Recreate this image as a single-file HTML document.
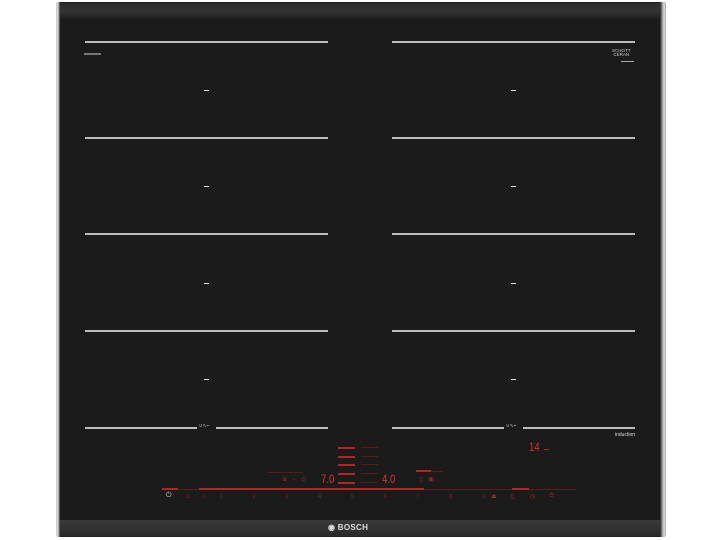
<!DOCTYPE html>
<html><head><meta charset="utf-8"><style>
*{margin:0;padding:0;box-sizing:border-box}
body{width:720px;height:540px;background:#fff;position:relative;overflow:hidden;font-family:"Liberation Sans",sans-serif}
.a{position:absolute}
.frame{left:56px;top:2px;width:610px;height:535px;background:linear-gradient(90deg,#b9b9b9,#e8e8e8 1px,#9a9a9a 3px,#222 4px,#222 calc(100% - 6px),#888 calc(100% - 4px),#ddd calc(100% - 2px),#aaa);border-radius:2px}
.glass{left:60px;top:3px;width:600px;height:517px;background:#1c1b1b}
.topband{left:60px;top:3px;width:600px;height:16px;background:linear-gradient(180deg,#2c2c2c,#353535 50%,#1e1d1d)}
.bot{left:60px;top:520px;width:600px;height:16px;background:linear-gradient(180deg,#3a3a3a,#2a2a2a);}
.ln{height:2px;background:#bdbdbd}
.d{width:5px;height:1px;background:#ddd}
.r{background:#b8231f}
.rd{background:#5a1a17}
.seg{color:#d9302a;font-size:12px;font-family:"Liberation Sans",sans-serif;transform:scaleX(.8);transform-origin:left}
.nums{left:203px;top:494px;width:282px;display:flex;justify-content:space-between;color:#7a2620;font-size:5px}
</style></head><body>
<div class="a frame"></div>
<div class="a glass"></div>
<div class="a topband"></div>
<div class="a bot"></div>
<div class="a" style="left:328px;top:523px;color:#ddd;font-weight:bold;font-size:8px;letter-spacing:.3px">◉ BOSCH</div>

<div class="a ln" style="left:85px;top:41px;width:243px"></div>
<div class="a ln" style="left:392px;top:41px;width:243px"></div>
<div class="a ln" style="left:85px;top:137px;width:243px"></div>
<div class="a ln" style="left:392px;top:137px;width:243px"></div>
<div class="a ln" style="left:85px;top:233px;width:243px"></div>
<div class="a ln" style="left:392px;top:233px;width:243px"></div>
<div class="a ln" style="left:85px;top:330px;width:243px"></div>
<div class="a ln" style="left:392px;top:330px;width:243px"></div>
<div class="a ln" style="left:85px;top:427px;width:112px"></div>
<div class="a ln" style="left:216px;top:427px;width:112px"></div>
<div class="a ln" style="left:392px;top:427px;width:112px"></div>
<div class="a ln" style="left:523px;top:427px;width:112px"></div>
<div class="a" style="left:199px;top:423px;color:#ccc;font-size:5px">∪∿⌐</div>
<div class="a" style="left:506px;top:423px;color:#ccc;font-size:5px">∪∿⌐</div>
<div class="a" style="left:615px;top:432px;color:#ddd;font-size:5px">induction</div>
<div class="a" style="left:84px;top:53px;width:17px;height:2px;background:#777"></div>
<div class="a" style="left:612px;top:49px;color:#ccc;font-size:4.5px;line-height:4px;text-align:center">SCHOTT<br>CERAN</div>
<div class="a" style="left:621px;top:61px;width:13px;height:1px;background:#aaa"></div>

<div class="a d" style="left:204px;top:90px"></div><div class="a d" style="left:511px;top:90px"></div>
<div class="a d" style="left:204px;top:186px"></div><div class="a d" style="left:511px;top:186px"></div>
<div class="a d" style="left:204px;top:283px"></div><div class="a d" style="left:511px;top:283px"></div>
<div class="a d" style="left:204px;top:379px"></div><div class="a d" style="left:511px;top:379px"></div>

<div class="a r" style="left:338px;top:447px;width:17px;height:1.5px"></div>
<div class="a r" style="left:338px;top:456px;width:17px;height:1.5px"></div>
<div class="a r" style="left:338px;top:464px;width:17px;height:1.5px"></div>
<div class="a r" style="left:338px;top:473px;width:17px;height:1.5px"></div>
<div class="a r" style="left:338px;top:482px;width:17px;height:1.5px"></div>
<div class="a rd" style="left:361px;top:447px;width:17px;height:1px"></div>
<div class="a rd" style="left:361px;top:456px;width:17px;height:1px"></div>
<div class="a rd" style="left:361px;top:464px;width:17px;height:1px"></div>
<div class="a rd" style="left:361px;top:473px;width:17px;height:1px"></div>
<div class="a rd" style="left:361px;top:482px;width:17px;height:1px"></div>
<div class="a rd" style="left:268px;top:472px;width:35px;height:1px"></div>
<div class="a r" style="left:416px;top:470px;width:15px;height:1.5px"></div>
<div class="a rd" style="left:431px;top:471px;width:12px;height:1px"></div>
<div class="a seg" style="left:321px;top:472px">7.0</div>
<div class="a seg" style="left:382px;top:472px">4.0</div>
<div class="a seg" style="left:529px;top:440px">14</div>
<div class="a r" style="left:544px;top:449px;width:5px;height:1px"></div>
<div class="a" style="left:282px;top:476px;color:#8a2a24;font-size:6px">♛ &nbsp; ⌐ &nbsp; ⊙</div>
<div class="a" style="left:420px;top:476px;color:#8a2a24;font-size:6px">▯ &nbsp; ▣</div>

<div class="a rd" style="left:162px;top:489px;width:414px;height:1px"></div>
<div class="a r" style="left:162px;top:488px;width:16px;height:2px"></div>
<div class="a r" style="left:199px;top:488px;width:225px;height:2px"></div>
<div class="a r" style="left:512px;top:488px;width:17px;height:2px"></div>
<div class="a" style="left:166px;top:492px;color:#ccc;font-size:7px">⏻</div>
<div class="a" style="left:185px;top:493px;color:#a03028;font-size:6px">♨</div>
<div class="a nums"><span>0</span><span>1</span><span>·</span><span>2</span><span>·</span><span>3</span><span>·</span><span>4</span><span>·</span><span>5</span><span>·</span><span>6</span><span>·</span><span>7</span><span>·</span><span>8</span><span>·</span><span>9</span></div>
<div class="a" style="left:491px;top:493px;color:#a03028;font-size:6px">⏏</div>
<div class="a" style="left:511px;top:493px;color:#a03028;font-size:6px">▯</div>
<div class="a" style="left:530px;top:493px;color:#a03028;font-size:6px">◷</div>
<div class="a" style="left:549px;top:493px;color:#a03028;font-size:6px">⏱</div>
</body></html>
